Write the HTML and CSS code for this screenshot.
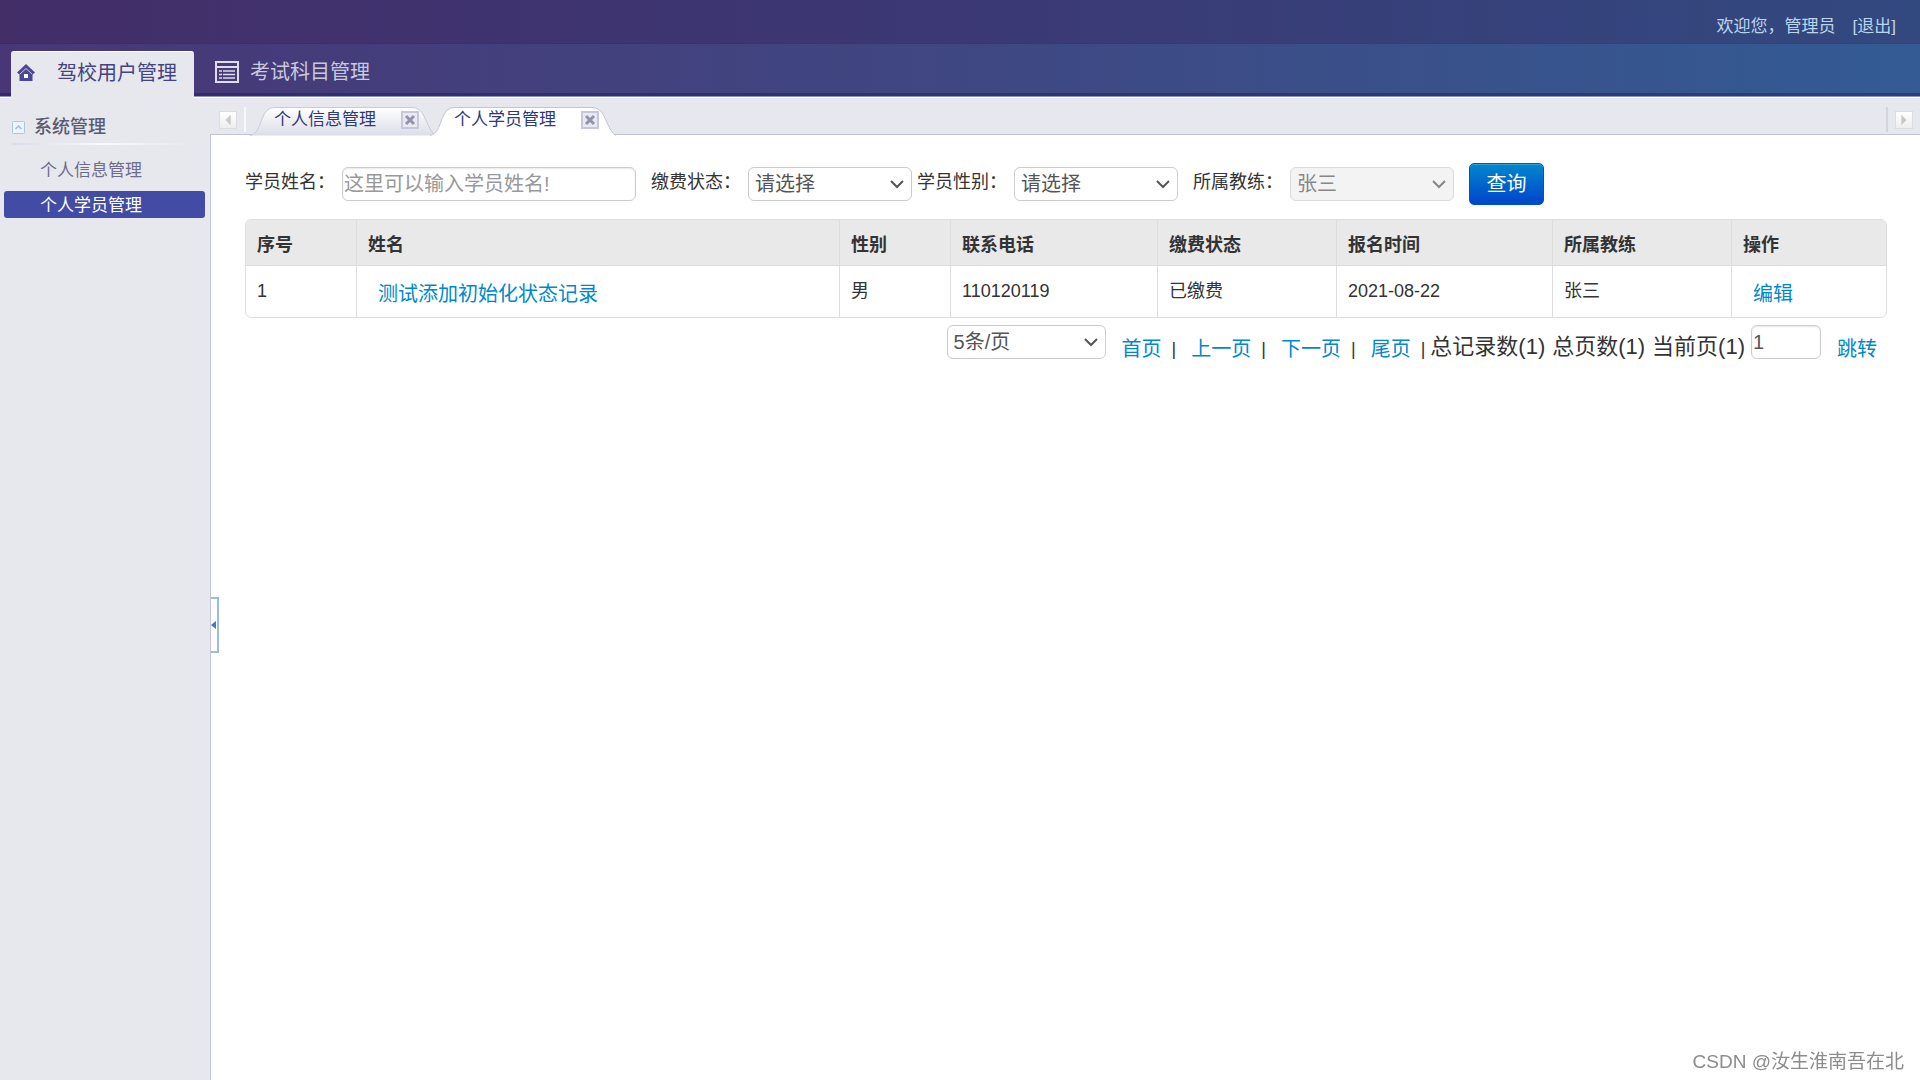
FILE: index.html
```html
<!DOCTYPE html>
<html lang="zh-CN">
<head>
<meta charset="utf-8">
<title>个人学员管理</title>
<link rel="stylesheet" href="styles.css">
</head>
<body>
<header class="top">
  <div class="welcome"><span>欢迎您，管理员</span><a href="#">[退出]</a></div>
</header>
<nav class="modules">
  <a class="module module-active" href="#">
    <svg class="home-icon" width="18" height="18" viewBox="0 0 18 18"><path d="M9 0 18 8.500 15.500 10.500V17H2.500V10.500L0 8.500Z" fill="#4b4795"/><path d="M3 10 9 4.500 15 10" fill="none" stroke="#c9c9de" stroke-width="1"/><rect x="7" y="10" width="4" height="4" fill="#fff"/></svg>
    驾校用户管理
  </a>
  <a class="module" href="#">
    <svg width="24" height="22" viewBox="0 0 24 22" fill="none" stroke="#dddcea" stroke-width="2"><path d="M1 1H23V21H1ZM1 6H23"/><path d="M4 10H7M8 10H20M4 13.5H7M8 13.5H20M4 17H7M8 17H20" stroke-width="1.5"/></svg>
    考试科目管理
  </a>
</nav>
<div class="body">
  <aside class="side">
    <h2 class="group">
      <svg width="13" height="13" viewBox="0 0 13 13" fill="none"><rect x="0.5" y="0.5" width="12" height="12" rx="1" fill="#eef4fb" stroke="#adc5dd"/><path d="M3.5 8 6.5 5 9.5 8" stroke="#a4bbd3" stroke-width="1.5"/></svg>
      系统管理
    </h2>
    <a class="item" href="#">个人信息管理</a>
    <a class="item item-active" href="#">个人学员管理</a>
  </aside>
  <main class="main">
    <div class="tabs">
      <button class="scroll scroll-left" aria-label="向左滚动"><svg width="18" height="18" viewBox="0 0 18 18"><path d="M12 3V15L6 9Z" fill="#c9c9c9"/></svg></button>
      <div class="tab-list">
        <div class="tab">
          <svg class="tab-shape" width="186" height="29" viewBox="0 0 186 29"><defs><linearGradient id="idle" x2="0" y2="1"><stop offset="0" stop-color="#fff"/><stop offset="1" stop-color="#dcdde8"/></linearGradient></defs><path d="M0 28.500C7 27 9 20 12 12Q16 .5 24 .5H162Q170 .5 174 9Q182 28 186 28.500" fill="url(#idle)" stroke="#c9c9dc"/></svg>
          <a href="#">个人信息管理</a>
          <button class="close" aria-label="关闭"><svg width="18" height="18" viewBox="0 0 18 18"><rect x="1" y="1" width="16" height="16" fill="#e9e9f1" stroke="#c6c6dc" stroke-width="2"/><path d="M5 5 13 13M13 5 5 13" stroke="#9293ab" stroke-width="3"/></svg></button>
        </div>
        <div class="tab tab-active">
          <svg class="tab-shape" width="186" height="29" viewBox="0 0 186 29"><path d="M0 29V28.500C7 27 9 20 12 12Q16 .5 24 .5H162Q170 .5 174 9Q182 28 186 28.500V29" fill="#fff" stroke="none"/><path d="M0 28.500C7 27 9 20 12 12Q16 .5 24 .5H162Q170 .5 174 9Q182 28 186 28.500" fill="none" stroke="#c3c3da"/></svg>
          <a href="#">个人学员管理</a>
          <button class="close" aria-label="关闭"><svg width="18" height="18" viewBox="0 0 18 18"><rect x="1" y="1" width="16" height="16" fill="#e9e9f1" stroke="#c6c6dc" stroke-width="2"/><path d="M5 5 13 13M13 5 5 13" stroke="#9293ab" stroke-width="3"/></svg></button>
        </div>
      </div>
      <button class="scroll scroll-right" aria-label="向右滚动"><svg width="18" height="18" viewBox="0 0 18 18"><path d="M6 3V15L12 9Z" fill="#c9c9c9"/></svg></button>
    </div>
    <section class="content">
      <form class="filters">
        <div class="field"><label for="name">学员姓名：</label><input id="name" class="box name" type="text" placeholder="这里可以输入学员姓名!"></div>
        <div class="pair">
          <div class="field"><label for="pay">缴费状态：</label><select id="pay" class="box pick"><option>请选择</option></select></div>
          <div class="field"><label for="sex">学员性别：</label><select id="sex" class="box pick"><option>请选择</option></select></div>
        </div>
        <div class="field"><label for="coach">所属教练：</label><select id="coach" class="box pick" disabled><option>张三</option></select></div>
        <button class="query" type="button">查询</button>
      </form>
      <table class="grid">
        <colgroup><col class="c-first"><col><col class="c-small"><col class="c-phone"><col class="c-mid"><col class="c-date"><col class="c-mid"><col class="c-op"></colgroup>
        <thead><tr><th>序号</th><th>姓名</th><th>性别</th><th>联系电话</th><th>缴费状态</th><th>报名时间</th><th>所属教练</th><th>操作</th></tr></thead>
        <tbody><tr><td>1</td><td><a class="link" href="#">测试添加初始化状态记录</a></td><td>男</td><td>110120119</td><td>已缴费</td><td>2021-08-22</td><td>张三</td><td><a class="link" href="#">编辑</a></td></tr></tbody>
      </table>
      <div class="pager">
        <select class="box size" aria-label="每页条数"><option>5条/页</option></select>
        <div class="links"><a class="link" href="#">首页</a>|<a class="link" href="#">上一页</a>|<a class="link" href="#">下一页</a>|<a class="link" href="#">尾页</a>|</div>
        <span class="totals"><span>总记录数(1)</span><span>总页数(1)</span><span>当前页(1)</span></span>
        <input class="box page" type="text" value="1" aria-label="页码">
        <a class="link" href="#">跳转</a>
      </div>
    </section>
    <button class="fold" aria-label="收起侧栏"><svg width="5" height="8" viewBox="0 0 5 8"><path d="M5 0V8L0 4Z" fill="#4a76ad"/></svg></button>
  </main>
</div>
<div class="watermark">CSDN @汝生淮南吾在北</div>
</body>
</html>
```
FILE: styles.css
```css
* { box-sizing: border-box; }
body {
  margin: 0;
  min-height: 100vh;
  display: flex;
  flex-direction: column;
  font: 18px/24px "Liberation Sans", "Noto Sans CJK SC", sans-serif;
  color: #333;
  background: #fff;
}
a { color: inherit; text-decoration: none; }
button { padding: 0; border: 0; font: inherit; cursor: pointer; }
svg { display: block; }

.top {
  height: 43px;
  padding: 15px 24px 0;
  display: flex;
  justify-content: flex-end;
  background: linear-gradient(90deg, #432e68, #3b3875 50%, #32497f);
}
.welcome { display: flex; gap: 17px; font-size: 17px; color: #bcd5ee; }
.modules {
  height: 55px;
  padding: 8px 11px 0;
  display: flex;
  gap: 21px;
  background:
    linear-gradient(#0000002e, #0000002e) 0 0 / 100% 1px no-repeat,
    linear-gradient(#fff, #fff) 0 100% / 100% 1px no-repeat,
    linear-gradient(#8c93bd, #8c93bd) 0 53px / 100% 1px no-repeat,
    linear-gradient(#1a1a5c70, #1a1a5c70) 0 50px / 100% 3px no-repeat,
    linear-gradient(90deg, #483777, #3f4782 50%, #335b94);
}
.module {
  display: flex;
  align-items: center;
  gap: 11px;
  padding-bottom: 5px;
  height: 47px;
  font-size: 20px;
  color: #c9c9dc;
}
.module-active {
  width: 183px;
  padding-left: 6px;
  gap: 22px;
  color: #45437f;
  background: #e7e8ee;
  border-top: 1px solid #fff;
  border-radius: 3px 3px 0 0;
}

.body { flex: 1; display: flex; }
.side { width: 210px; padding: 17px 5px 0 4px; background: #e7e8ee; }
.group {
  margin: 0 14px 11px 8px;
  padding-bottom: 4px;
  display: flex;
  align-items: center;
  gap: 9px;
  font-size: 18px;
  font-weight: 500;
  color: #5a5a70;
  border-bottom: 2px solid;
  border-image: linear-gradient(90deg, #d8dde9, #fafafc, #e7e8ee) 1;
}
.item {
  display: block;
  height: 27px;
  margin-bottom: 8px;
  padding: 1px 0 0 36px;
  border-radius: 3px;
  font-size: 17px;
  line-height: 27px;
  color: #6c6c8c;
}
.item-active { color: #fff; background: #434ca5; }

.main { flex: 1; min-width: 0; position: relative; border-left: 1px solid #c3c3da; display: flex; flex-direction: column; }
.tabs {
  height: 37px;
  margin-left: -1px;
  padding: 9px 7px 0 9px;
  display: flex;
  background: #e7e8ee;
  border-bottom: 1px solid #c0c3d6;
}
.scroll { height: 25px; width: 27px; display: flex; align-items: center; background: none; }
.scroll svg { background: linear-gradient(#fff, #eee); border: 1px solid #dcdcde; }
.scroll-left { border-right: 2px solid #f8f8fa; }
.scroll-right { border-left: 2px solid #d4d4de; justify-content: flex-end; }
.tab-list { flex: 1; display: flex; padding-left: 4px; }
.tab {
  position: relative;
  width: 180px;
  height: 29px;
  padding: 1px 11px 0 24px;
  display: flex;
  justify-content: space-between;
  align-items: flex-start;
  font-size: 17px;
  color: #2c3a78;
}
.tab-shape { position: absolute; left: 0; top: 0; }
.tab a { position: relative; }
.close { position: relative; margin-top: 3px; background: none; }

.content { padding: 28px 33px 28px 34px; }
.filters { display: flex; flex-wrap: wrap; gap: 0 15px; align-items: center; margin-bottom: 14px; }
.field, .pair { display: flex; align-items: center; }
.pair { gap: 5px; }
.field label { width: 97px; padding-bottom: 4px; white-space: nowrap; }
.box {
  height: 34px;
  border: 1px solid #ccc;
  border-radius: 6px;
  font: 20px/24px "Liberation Sans", "Noto Sans CJK SC", sans-serif;
  color: #555;
  background: #fff;
}
input.box { padding: 0 1px; box-shadow: inset 0 1px 2px #00000018; }
.box::placeholder { color: #999; }
select.box {
  appearance: none;
  padding: 0 24px 0 6px;
  background: #fff url("data:image/svg+xml,%3Csvg xmlns='http://www.w3.org/2000/svg' width='14' height='9'%3E%3Cpath d='M1 1 7 7 13 1' fill='none' stroke='%23555' stroke-width='2'/%3E%3C/svg%3E") no-repeat right 7px center;
}
select.box:disabled { background-color: #eee; opacity: 0.7; }
.name { width: 294px; }
.pick { width: 164px; }
.query {
  width: 75px;
  height: 42px;
  border: 1px solid #0056b4;
  border-radius: 5px;
  font-size: 20px;
  color: #fff;
  background: linear-gradient(#0088cc, #0044cc);
  box-shadow: inset 0 1px 0 #ffffff33, 0 1px 2px #0000000d;
}

.grid {
  width: 100%;
  table-layout: fixed;
  border-collapse: separate;
  border-spacing: 0;
  border: 1px solid #ddd;
  border-radius: 6px;
  overflow: hidden;
}
.grid th, .grid td { padding: 13px 11px 8px; text-align: left; vertical-align: top; border-left: 1px solid #ddd; white-space: nowrap; }
.grid th { height: 45px; background: #e9e9e9; }
.grid td { height: 52px; border-top: 1px solid #ddd; }
.grid th:first-child, .grid td:first-child { border-left: 0; }
.c-first { width: 110px; }
.c-small { width: 111px; }
.c-phone { width: 207px; }
.c-mid { width: 179px; }
.c-date { width: 216px; }
.c-op { width: 155px; }
.link { display: inline-block; padding: 3px 10px 0; font-size: 20px; color: #0088cc; }

.pager { display: flex; justify-content: flex-end; margin-top: 7px; white-space: nowrap; }
.size { width: 159px; margin-right: 2px; }
.links, .pager > .link { padding-top: 12px; }
.links { display: flex; font-size: 18px; }
.links .link { padding: 0 10px 0 14px; }
.links .link + .link { padding-left: 15px; }
.totals { display: flex; gap: 7px; padding: 10px 6px 0 5px; font-size: 22px; }
.page { width: 70px; margin-right: 6px; }

.fold {
  position: absolute;
  left: 0;
  top: 499px;
  width: 8px;
  height: 56px;
  background: #fff;
  border: 2px solid #9dbbe0;
  border-left: 0;
}
.watermark { position: fixed; right: 16px; bottom: 6px; font-size: 19px; color: #8c8c8c; }
```
